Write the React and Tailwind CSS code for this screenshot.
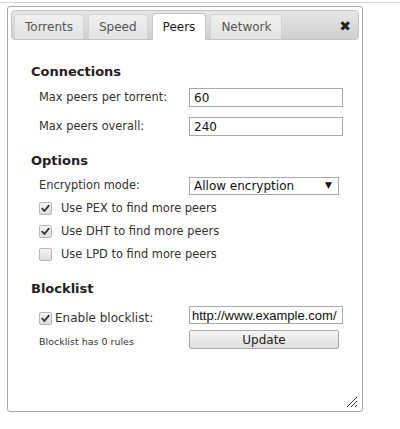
import React from 'react';

const font = { fontFamily: '"DejaVu Sans", Verdana, sans-serif' };

function Tab({ label, active }) {
  return active ? (
    <div className="h-[27px] px-[10px] flex items-center bg-white border border-b-0 border-[#c5c5c5] rounded-t-[4px] text-[12px] text-[#222] -mb-px">
      {label}
    </div>
  ) : (
    <div className="h-[25px] px-[10px] flex items-center bg-gradient-to-b from-[#f0f0f0] to-[#e3e3e3] border border-b-0 border-[#d3d3d3] rounded-t-[4px] text-[12px] text-[#555]">
      {label}
    </div>
  );
}

function Check({ checked }) {
  return (
    <span className="w-[13px] h-[13px] rounded-[2px] border border-[#b8b8b8] bg-gradient-to-b from-[#f4f4f4] to-[#dcdcdc] flex items-center justify-center shrink-0">
      {checked && (
        <svg width="9" height="9" viewBox="0 0 9 9">
          <path d="M1.2 4.6 L3.4 7 L7.8 1.6" fill="none" stroke="#333" strokeWidth="1.8" strokeLinecap="round" strokeLinejoin="round" />
        </svg>
      )}
    </span>
  );
}

export default function App() {
  return (
    <div className="w-[400px] h-[429px] bg-white overflow-hidden" style={font}>
      {/* top page line */}
      <div className="mt-[2px] h-px bg-[#d8d8d8]" />

      <div className="ml-[7px] mt-[3px] w-[356px] h-[406px] border border-[#a9a9a9] rounded-[3px] p-[3px] flex flex-col relative">
        {/* tab header */}
        <div className="h-[30px] bg-gradient-to-b from-[#e6e6e6] to-[#cfcfcf] border border-[#c4c4c4] rounded-[4px] flex items-end pl-[2px] gap-[4px] relative">
          <Tab label="Torrents" />
          <Tab label="Speed" />
          <Tab label="Peers" active />
          <Tab label="Network" />
          <span className="absolute right-[7px] top-[8px] text-[14px] font-bold text-[#222] leading-none">✖</span>
        </div>

        <div className="pl-[20px] pt-[24px]">
          <h2 className="text-[13px] font-bold text-[#222] leading-[16px]">Connections</h2>
          <div className="pl-[8px] mt-[8px] flex flex-col gap-[10px] text-[11.4px] text-[#333]">
            <div className="flex items-center">
              <span className="w-[150px]">Max peers per torrent:</span>
              <div className="w-[154px] h-[19px] border border-[#a9a9a9] px-[4px] flex items-center text-[12px] text-[#111]">60</div>
            </div>
            <div className="flex items-center">
              <span className="w-[150px]">Max peers overall:</span>
              <div className="w-[154px] h-[19px] border border-[#a9a9a9] px-[4px] flex items-center text-[12px] text-[#111]">240</div>
            </div>
          </div>

          <h2 className="mt-[17px] text-[13px] font-bold text-[#222] leading-[16px]">Options</h2>
          <div className="pl-[8px] mt-[8px] flex flex-col text-[11.4px] text-[#333]">
            <div className="flex items-center">
              <span className="w-[150px]">Encryption mode:</span>
              <div className="w-[150px] h-[18px] border border-[#a9a9a9] pl-[4px] pr-[6px] flex items-center justify-between text-[12px] text-[#111]">
                <span>Allow encryption</span>
                <span className="text-[9px]">▼</span>
              </div>
            </div>
            <div className="flex flex-col gap-[6px] mt-[5px]">
              <div className="flex items-center gap-[9px]"><Check checked /><span>Use PEX to find more peers</span></div>
              <div className="flex items-center gap-[9px]"><Check checked /><span>Use DHT to find more peers</span></div>
              <div className="flex items-center gap-[9px]"><Check /><span>Use LPD to find more peers</span></div>
            </div>
          </div>

          <h2 className="mt-[18px] text-[13px] font-bold text-[#222] leading-[16px]">Blocklist</h2>
          <div className="pl-[8px] mt-[9px] flex flex-col gap-[6px] text-[#333]">
            <div className="flex items-center">
              <span className="w-[150px] flex items-center gap-[3px] text-[12px] translate-y-[3px]"><Check checked /><span>Enable blocklist:</span></span>
              <div className="w-[154px] h-[18px] border border-[#a9a9a9] px-[2px] flex items-center text-[13px] text-[#111] overflow-hidden whitespace-nowrap" style={{ fontFamily: '"Liberation Sans", Arial, sans-serif' }}>http://www.example.com/</div>
            </div>
            <div className="flex items-center">
              <span className="w-[150px] text-[9.5px] translate-y-[2px]">Blocklist has 0 rules</span>
              <div className="w-[150px] h-[19px] border border-[#a9a9a9] rounded-[2px] bg-gradient-to-b from-[#f5f5f5] to-[#dedede] flex items-center justify-center text-[12px] text-[#222]">Update</div>
            </div>
          </div>
        </div>

        {/* resize grip */}
        <svg className="absolute right-[4px] bottom-[3px]" width="12" height="12" viewBox="0 0 12 12">
          <path d="M11 1 L1 11 M11 5 L5 11 M11 9 L9 11" stroke="#333" strokeWidth="1" />
        </svg>
      </div>
    </div>
  );
}
